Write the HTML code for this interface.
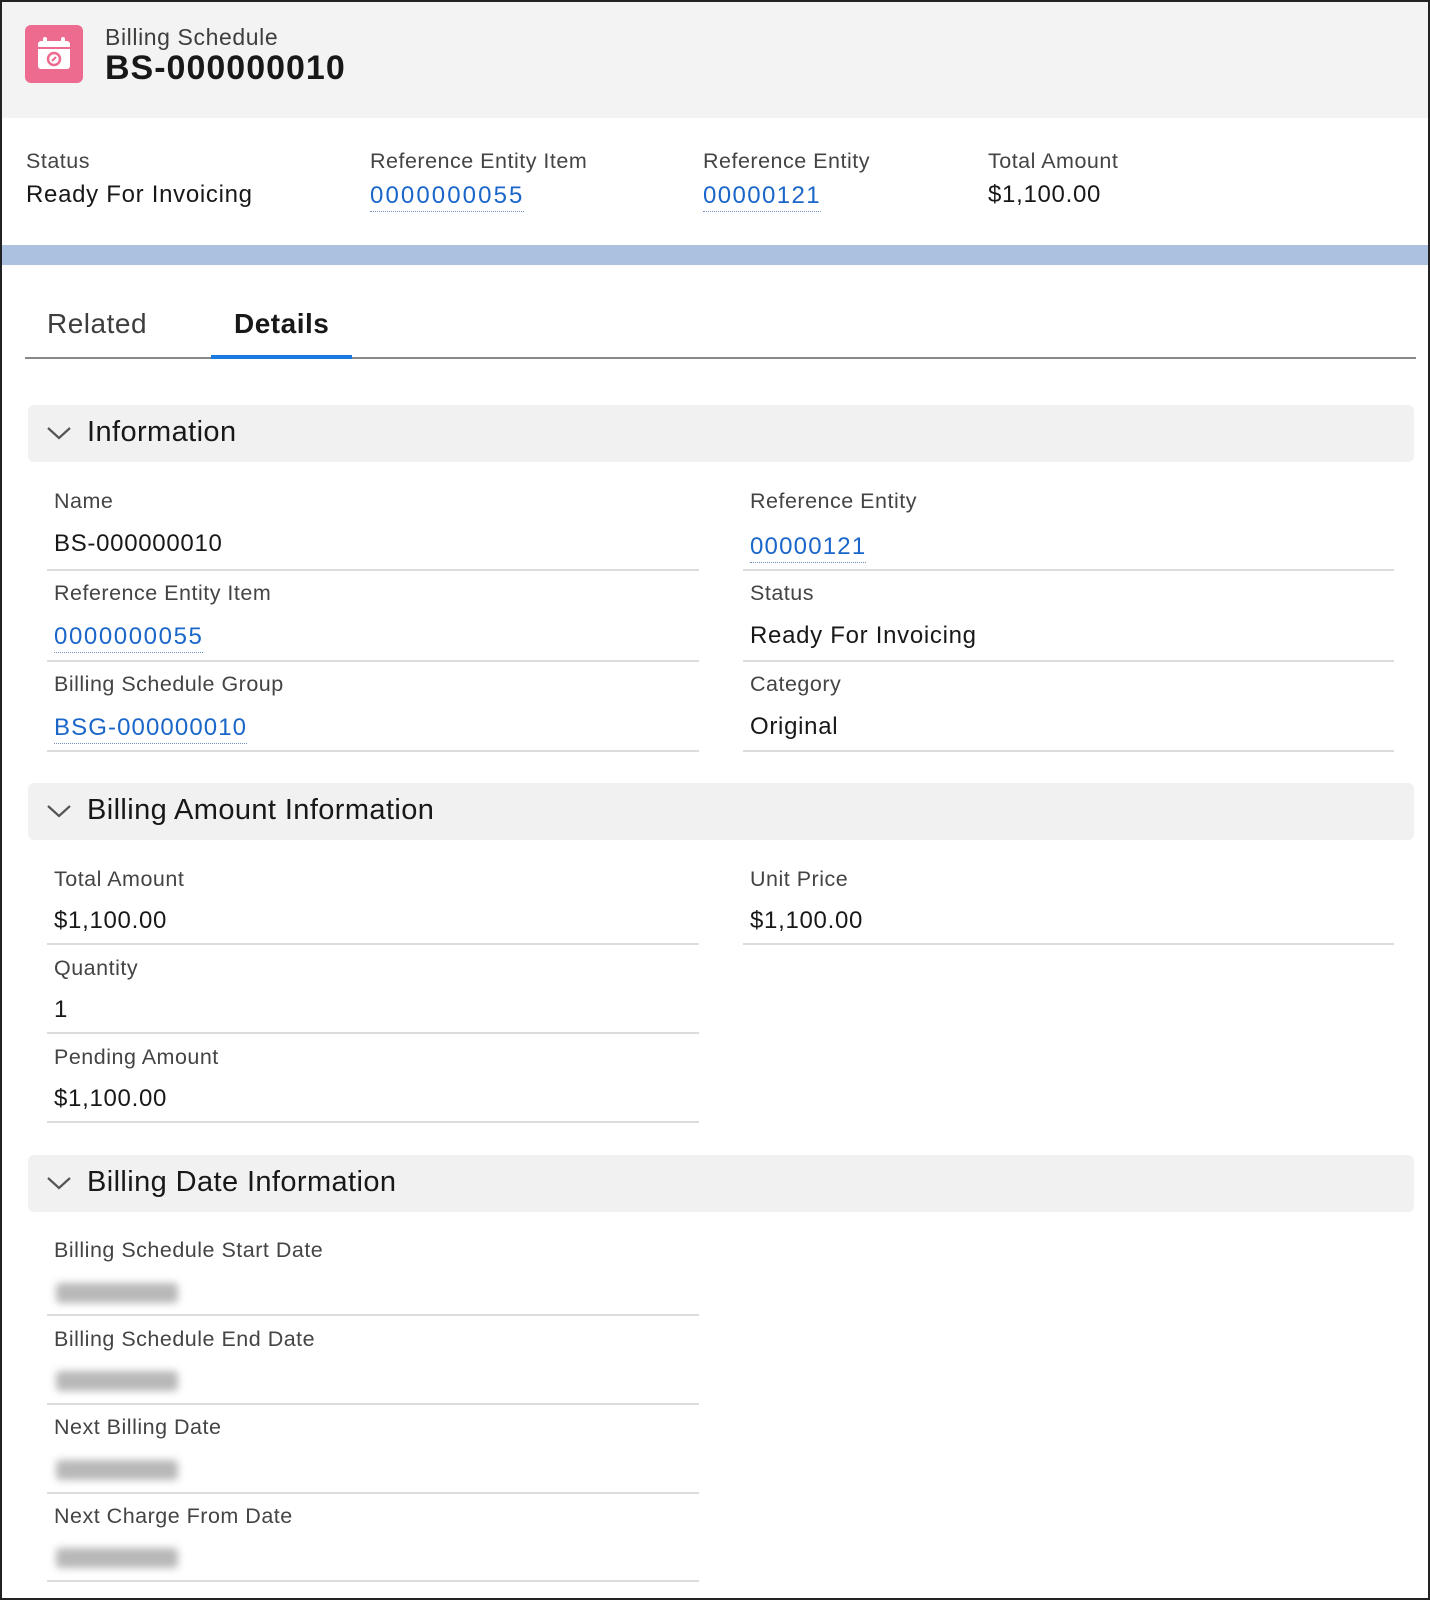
<!DOCTYPE html>
<html><head><meta charset="utf-8"><style>
*{margin:0;padding:0;box-sizing:border-box}
body{width:1430px;height:1600px;background:#fff;font-family:"Liberation Sans",sans-serif;position:relative;overflow:hidden}
.frame{position:absolute;left:0;top:0;width:1430px;height:1600px;border:2px solid #222}
.t{position:absolute;line-height:1;white-space:nowrap}
.lb{font-size:21.5px;color:#444;letter-spacing:0.5px}
.vl{font-size:24px;color:#181818;letter-spacing:0.7px}
.lk{color:#1b66c9;border-bottom:1px dotted #6f8fbf;padding-bottom:2px}
.ln{position:absolute;height:2px;background:#dcdcdc}
.sec{position:absolute;left:28px;width:1386px;height:57px;background:#f1f1f1;border-radius:6px}
.sec span{position:absolute;left:59px;top:13px;font-size:29px;color:#181818;line-height:1;letter-spacing:0.4px}
.sec svg{position:absolute;left:18px;top:20px}
.blur{position:absolute;width:122px;height:20px;background:#b8b8b8;filter:blur(4px);border-radius:4px}
</style></head><body>
<div style="position:absolute;left:0;top:0;width:1430px;height:118px;background:#f3f3f3"></div>
<div style="position:absolute;left:25px;top:25px;width:58px;height:58px;background:#ed6b8f;border-radius:6px"></div>
<svg style="position:absolute;left:25px;top:25px" width="58" height="58" viewBox="0 0 58 58">
<rect x="13" y="16" width="32" height="28" rx="3" fill="#fff"/>
<rect x="13" y="22" width="32" height="2" fill="#ed6b8f"/>
<rect x="18" y="12" width="4" height="7" rx="2" fill="#fff"/>
<rect x="36" y="12" width="4" height="7" rx="2" fill="#fff"/>
<circle cx="29" cy="34" r="6" fill="none" stroke="#ed6b8f" stroke-width="2.5"/>
<path d="M27 36 L31 32" stroke="#ed6b8f" stroke-width="2"/>
</svg>
<div class="t" style="left:105px;top:26px;font-size:23px;color:#3e3e3c;letter-spacing:0.6px">Billing Schedule</div>
<div class="t" style="left:105px;top:51px;font-size:34px;font-weight:bold;color:#181818;letter-spacing:1px">BS-000000010</div>

<div class="t lb" style="left:26px;top:151px">Status</div>
<div class="t vl" style="left:26px;top:183px">Ready For Invoicing</div>
<div class="t lb" style="left:370px;top:151px">Reference Entity Item</div>
<div class="t vl" style="left:370px;top:184px"><span class="lk" style="letter-spacing:2.1px">0000000055</span></div>
<div class="t lb" style="left:703px;top:151px">Reference Entity</div>
<div class="t vl" style="left:703px;top:184px"><span class="lk" style="letter-spacing:1.4px">00000121</span></div>
<div class="t lb" style="left:988px;top:151px">Total Amount</div>
<div class="t vl" style="left:988px;top:183px">$1,100.00</div>

<div style="position:absolute;left:0;top:245px;width:1430px;height:20px;background:#abc1df"></div>

<div class="t" style="left:47px;top:310px;font-size:28px;color:#3e3e3c;letter-spacing:0.5px">Related</div>
<div class="t" style="left:234px;top:310px;font-size:28px;color:#181818;font-weight:bold;letter-spacing:0.5px">Details</div>
<div style="position:absolute;left:25px;top:357px;width:1391px;height:2px;background:#888"></div>
<div style="position:absolute;left:211px;top:355px;width:141px;height:4px;background:#1b7ae0"></div>

<div class="sec" style="top:405px"><svg width="26" height="16" viewBox="0 0 26 16"><path d="M2 3 L13 13 L24 3" fill="none" stroke="#555" stroke-width="2.2"/></svg><span>Information</span></div>
<div class="t lb" style="left:54px;top:491px">Name</div>
<div class="t vl" style="left:54px;top:532px">BS-000000010</div>
<div class="ln" style="left:47px;top:569px;width:652px"></div>
<div class="t lb" style="left:54px;top:583px">Reference Entity Item</div>
<div class="t vl" style="left:54px;top:625px"><span class="lk" style="letter-spacing:1.6px">0000000055</span></div>
<div class="ln" style="left:47px;top:660px;width:652px"></div>
<div class="t lb" style="left:54px;top:674px">Billing Schedule Group</div>
<div class="t vl" style="left:54px;top:716px"><span class="lk" style="letter-spacing:1.1px">BSG-000000010</span></div>
<div class="ln" style="left:47px;top:750px;width:652px"></div>

<div class="t lb" style="left:750px;top:491px">Reference Entity</div>
<div class="t vl" style="left:750px;top:535px"><span class="lk" style="letter-spacing:1.2px">00000121</span></div>
<div class="ln" style="left:743px;top:569px;width:651px"></div>
<div class="t lb" style="left:750px;top:583px">Status</div>
<div class="t vl" style="left:750px;top:624px">Ready For Invoicing</div>
<div class="ln" style="left:743px;top:660px;width:651px"></div>
<div class="t lb" style="left:750px;top:674px">Category</div>
<div class="t vl" style="left:750px;top:715px">Original</div>
<div class="ln" style="left:743px;top:750px;width:651px"></div>

<div class="sec" style="top:783px"><svg width="26" height="16" viewBox="0 0 26 16"><path d="M2 3 L13 13 L24 3" fill="none" stroke="#555" stroke-width="2.2"/></svg><span>Billing Amount Information</span></div>
<div class="t lb" style="left:54px;top:869px">Total Amount</div>
<div class="t vl" style="left:54px;top:909px">$1,100.00</div>
<div class="ln" style="left:47px;top:943px;width:652px"></div>
<div class="t lb" style="left:54px;top:958px">Quantity</div>
<div class="t vl" style="left:54px;top:998px">1</div>
<div class="ln" style="left:47px;top:1032px;width:652px"></div>
<div class="t lb" style="left:54px;top:1047px">Pending Amount</div>
<div class="t vl" style="left:54px;top:1087px">$1,100.00</div>
<div class="ln" style="left:47px;top:1121px;width:652px"></div>
<div class="t lb" style="left:750px;top:869px">Unit Price</div>
<div class="t vl" style="left:750px;top:909px">$1,100.00</div>
<div class="ln" style="left:743px;top:943px;width:651px"></div>

<div class="sec" style="top:1155px"><svg width="26" height="16" viewBox="0 0 26 16"><path d="M2 3 L13 13 L24 3" fill="none" stroke="#555" stroke-width="2.2"/></svg><span>Billing Date Information</span></div>
<div class="t lb" style="left:54px;top:1240px">Billing Schedule Start Date</div>
<div class="blur" style="left:56px;top:1283px"></div>
<div class="ln" style="left:47px;top:1314px;width:652px"></div>
<div class="t lb" style="left:54px;top:1329px">Billing Schedule End Date</div>
<div class="blur" style="left:56px;top:1371px"></div>
<div class="ln" style="left:47px;top:1403px;width:652px"></div>
<div class="t lb" style="left:54px;top:1417px">Next Billing Date</div>
<div class="blur" style="left:56px;top:1460px"></div>
<div class="ln" style="left:47px;top:1492px;width:652px"></div>
<div class="t lb" style="left:54px;top:1506px">Next Charge From Date</div>
<div class="blur" style="left:56px;top:1548px"></div>
<div class="ln" style="left:47px;top:1580px;width:652px"></div>

<div class="frame"></div>
</body></html>
